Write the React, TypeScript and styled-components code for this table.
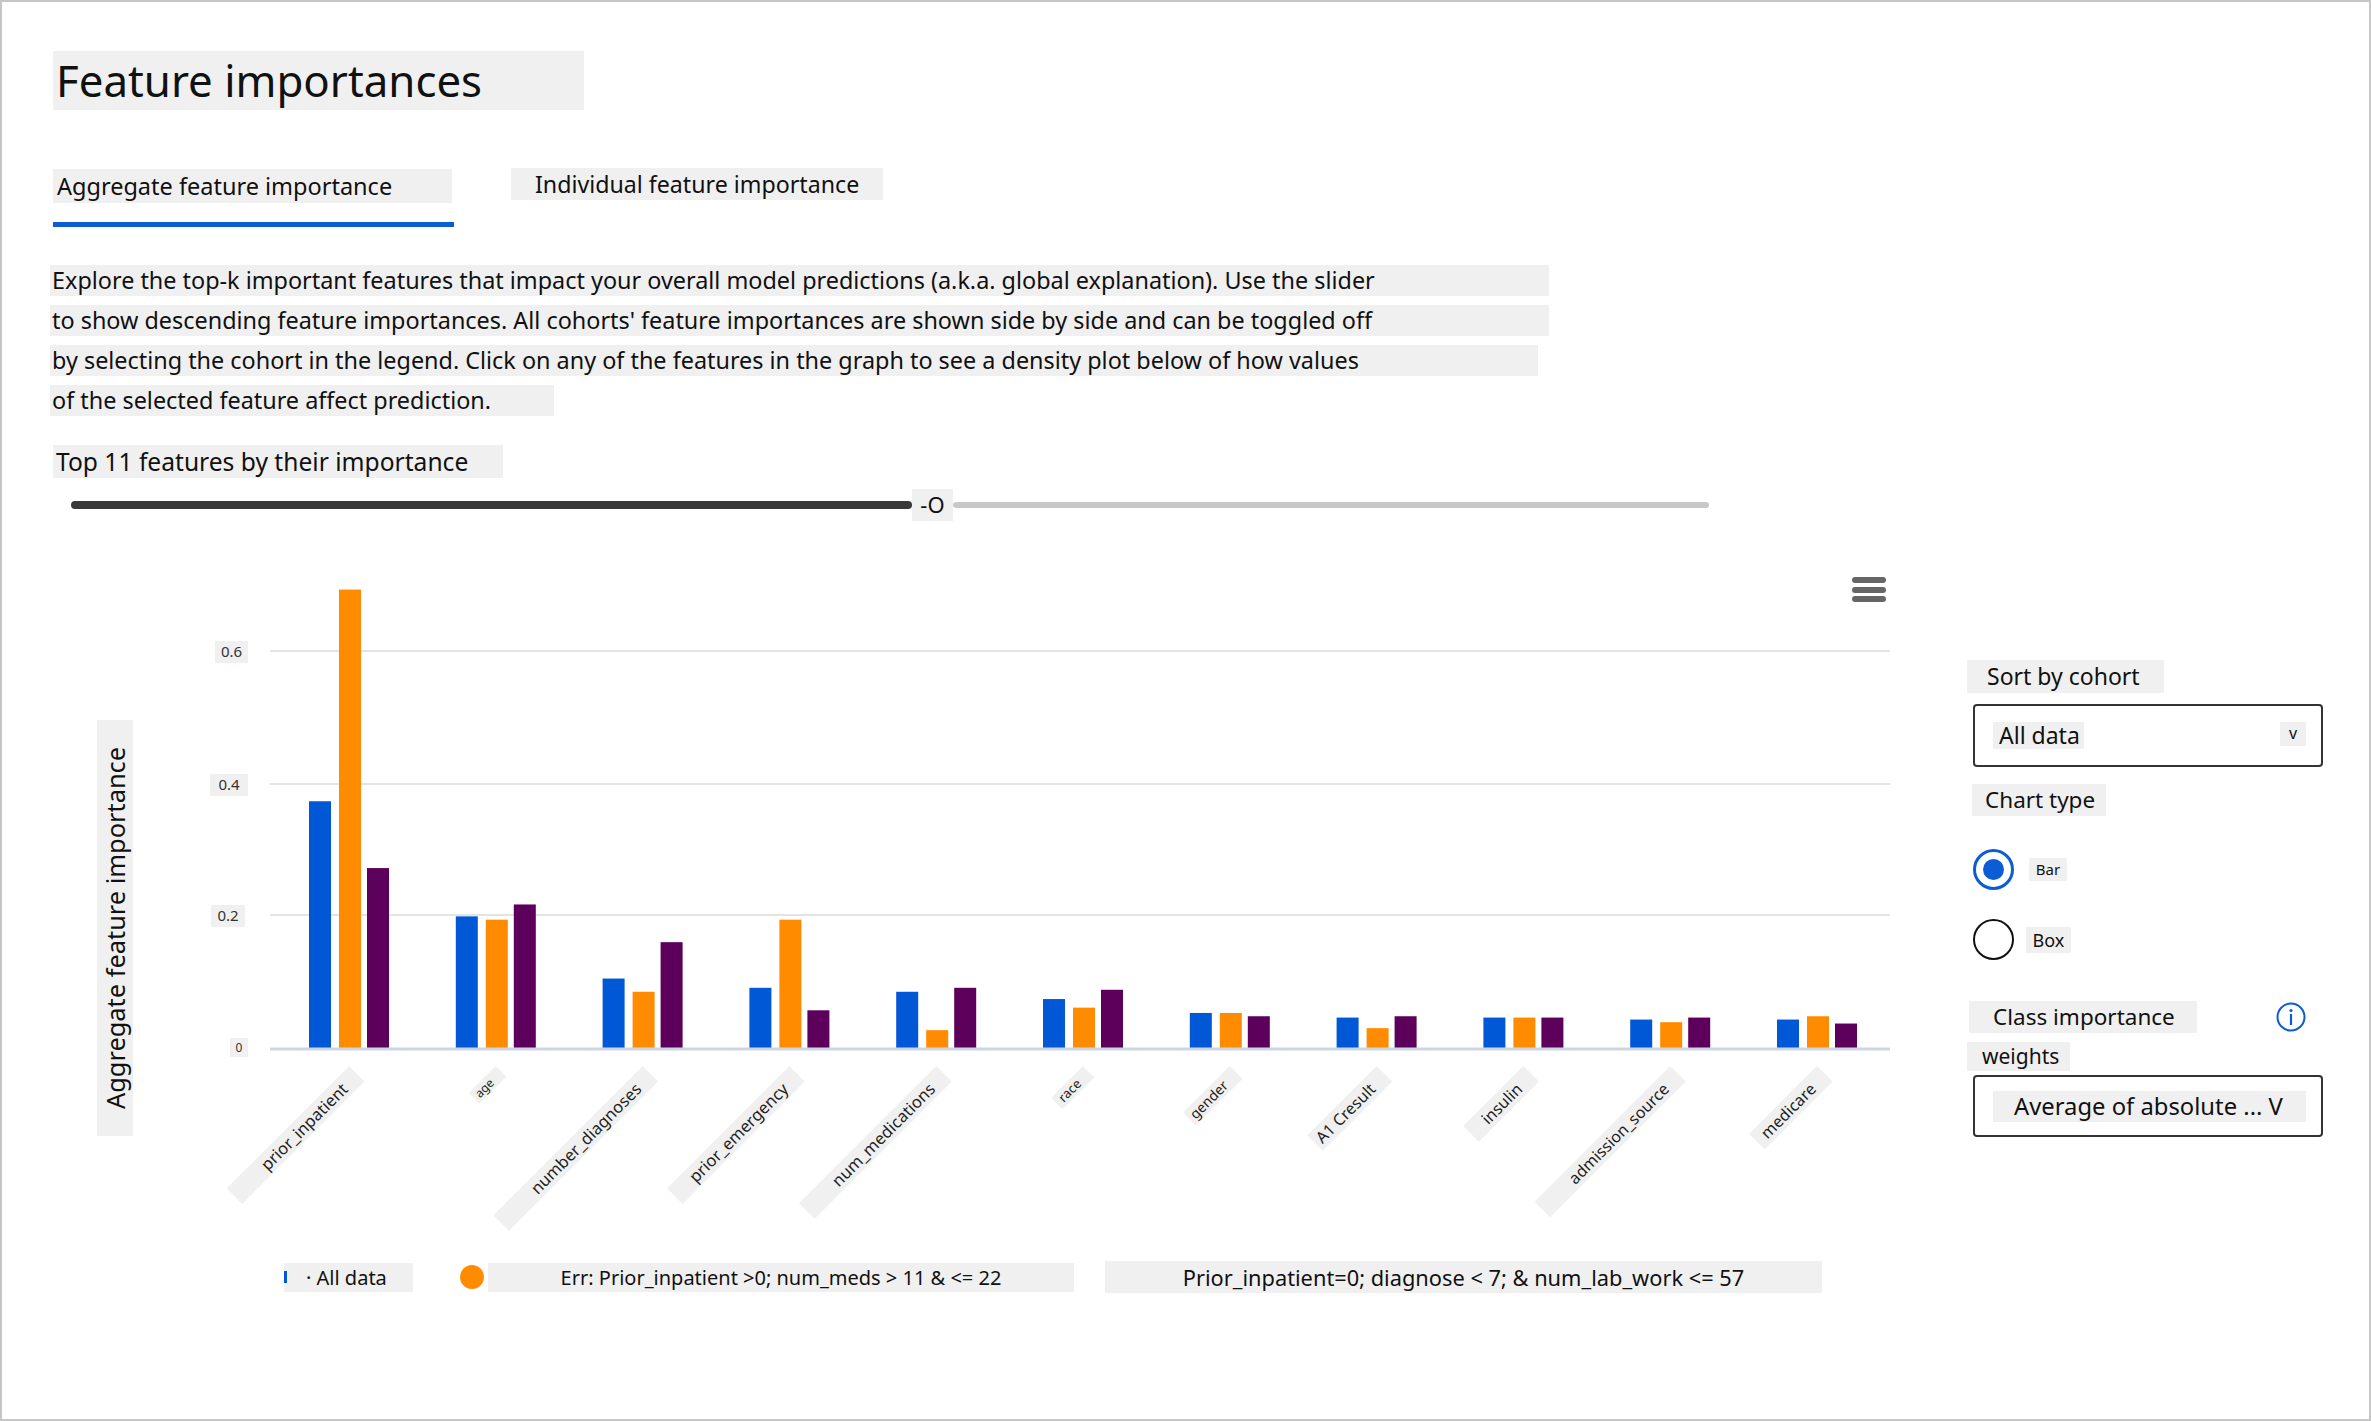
import React from "react";
import styled, { createGlobalStyle } from "styled-components";

const GlobalStyle = createGlobalStyle`
  html, body {
    margin: 0;
    padding: 0;
    background: #ffffff;
  }
  body {
    font-family: "Noto Sans", "Open Sans", sans-serif;
    color: #111111;
  }
`;

const BLUE = "#0058d6";
const ORANGE = "#ff8c00";
const PURPLE = "#5c005c";
const ACCENT = "#0b5cd5";
const CHIP = "#f0f0f0";

const Page = styled.div`
  box-sizing: border-box;
  width: 2371px;
  height: 1421px;
  border: 2px solid #c6c6c6;
  padding: 49px 0 0 51px;
  display: flex;
  flex-direction: column;
  align-items: flex-start;
  overflow: hidden;
`;

const Title = styled.h1`
  box-sizing: border-box;
  margin: 0;
  width: 531px;
  height: 59px;
  padding-left: 3px;
  background: ${CHIP};
  font-size: 43.8px;
  font-weight: 400;
  line-height: 59px;
  white-space: nowrap;
`;

const TabBar = styled.div`
  display: flex;
  align-items: flex-start;
  gap: 57px;
  margin-top: 58px;
`;

const Tab = styled.div`
  display: flex;
  flex-direction: column;
`;

const TabLabel = styled.span<{ $w: number; $h: number; $pad: number; $size: number; $top?: number }>`
  box-sizing: border-box;
  width: ${(p) => p.$w}px;
  height: ${(p) => p.$h}px;
  margin-top: ${(p) => p.$top ?? 0}px;
  padding-left: ${(p) => p.$pad}px;
  background: ${CHIP};
  font-size: ${(p) => p.$size}px;
  line-height: ${(p) => p.$h}px;
  white-space: nowrap;
`;

const TabUnderline = styled.div`
  margin-top: 19px;
  width: 401px;
  height: 5px;
  background: ${ACCENT};
`;

const Description = styled.div`
  display: flex;
  flex-direction: column;
  align-items: flex-start;
  gap: 9px;
  margin: 38px 0 0 -3px;
`;

const DescLine = styled.span<{ $w: number }>`
  box-sizing: border-box;
  width: ${(p) => p.$w}px;
  height: 31px;
  padding-left: 2px;
  background: ${CHIP};
  font-size: 23.4px;
  line-height: 31px;
  white-space: nowrap;
`;

const TopK = styled.span`
  box-sizing: border-box;
  width: 450px;
  height: 33px;
  margin-top: 29px;
  padding-left: 3px;
  background: ${CHIP};
  font-size: 24.6px;
  line-height: 33px;
  white-space: nowrap;
`;

const Slider = styled.div`
  display: flex;
  align-items: center;
  width: 1638px;
  height: 32px;
  margin: 11px 0 0 18px;
`;

const FilledTrack = styled.div`
  width: 841px;
  height: 8px;
  border-radius: 4px;
  background: #383838;
`;

const Thumb = styled.span`
  width: 41px;
  height: 32px;
  background: ${CHIP};
  font-size: 22px;
  line-height: 30px;
  text-align: center;
`;

const EmptyTrack = styled.div`
  flex: 1;
  height: 6px;
  border-radius: 3px;
  background: #c8c8c8;
`;

const MainRow = styled.div`
  display: flex;
  align-items: flex-start;
  margin-top: 38px;
`;

const ChartColumn = styled.div`
  display: flex;
  flex-direction: column;
`;

const ChartRow = styled.div`
  display: flex;
  align-items: flex-start;
`;

const AxisTitle = styled.div`
  width: 36px;
  height: 416px;
  margin: 161px 0 0 44px;
  background: ${CHIP};
  writing-mode: vertical-rl;
  transform: rotate(180deg);
  font-size: 25.4px;
  line-height: 36px;
  text-align: center;
  white-space: nowrap;
`;

const Plot = styled.svg`
  display: block;
  margin-left: 7px;
  font-family: "Noto Sans", "Open Sans", sans-serif;
`;

const Legend = styled.div`
  display: flex;
  align-items: center;
  margin: 22px 0 0 231px;
`;

const LegendChip = styled.span<{ $w: number; $h: number; $size: number; $gap: number }>`
  box-sizing: border-box;
  display: flex;
  align-items: center;
  justify-content: center;
  width: ${(p) => p.$w}px;
  height: ${(p) => p.$h}px;
  margin-left: ${(p) => p.$gap}px;
  background: ${CHIP};
  font-size: ${(p) => p.$size}px;
  white-space: nowrap;
`;

const AllDataChip = styled(LegendChip)`
  justify-content: flex-start;
  gap: 19px;
`;

const Sliver = styled.span`
  width: 3px;
  height: 12px;
  background: ${BLUE};
`;

const Dot = styled.span`
  width: 24px;
  height: 24px;
  margin-left: 47px;
  border-radius: 50%;
  background: ${ORANGE};
`;

const Side = styled.div`
  display: flex;
  flex-direction: column;
  align-items: flex-start;
  margin: 101px 0 0 67px;
`;

const SideLabel = styled.span<{ $w: number; $h: number; $pad: number; $top: number; $left?: number; $size?: number }>`
  box-sizing: border-box;
  width: ${(p) => p.$w}px;
  height: ${(p) => p.$h}px;
  margin: ${(p) => p.$top}px 0 0 ${(p) => p.$left ?? 0}px;
  padding-left: ${(p) => p.$pad}px;
  background: ${CHIP};
  font-size: ${(p) => p.$size ?? 23}px;
  line-height: ${(p) => p.$h}px;
  white-space: nowrap;
`;

const Dropdown = styled.div<{ $top: number; $h: number }>`
  box-sizing: border-box;
  display: flex;
  align-items: center;
  justify-content: space-between;
  width: 350px;
  height: ${(p) => p.$h}px;
  margin: ${(p) => p.$top}px 0 0 6px;
  padding: 0 15px 0 18px;
  border: 2px solid #333333;
  border-radius: 4px;
`;

const DropValue = styled.span<{ $w: number; $h: number; $pad: number; $size: number }>`
  box-sizing: border-box;
  width: ${(p) => p.$w}px;
  height: ${(p) => p.$h}px;
  padding-left: ${(p) => p.$pad}px;
  background: ${CHIP};
  font-size: ${(p) => p.$size}px;
  line-height: ${(p) => p.$h}px;
  white-space: nowrap;
`;

const Chevron = styled.span`
  width: 26px;
  height: 24px;
  margin-top: -4px;
  background: ${CHIP};
  font-size: 16px;
  line-height: 22px;
  text-align: center;
`;

const RadioRow = styled.div<{ $top: number; $gap: number }>`
  display: flex;
  align-items: center;
  gap: ${(p) => p.$gap}px;
  margin: ${(p) => p.$top}px 0 0 6px;
`;

const RadioCircle = styled.span<{ $checked?: boolean }>`
  box-sizing: border-box;
  display: flex;
  align-items: center;
  justify-content: center;
  width: 41px;
  height: 41px;
  border-radius: 50%;
  border: ${(p) => (p.$checked ? `3px solid ${ACCENT}` : "2px solid #111")};
  &::after {
    content: "";
    display: ${(p) => (p.$checked ? "block" : "none")};
    width: 21px;
    height: 21px;
    border-radius: 50%;
    background: ${ACCENT};
  }
`;

const RadioLabel = styled.span<{ $w: number; $h: number; $size: number }>`
  width: ${(p) => p.$w}px;
  height: ${(p) => p.$h}px;
  background: ${CHIP};
  font-size: ${(p) => p.$size}px;
  line-height: ${(p) => p.$h}px;
  text-align: center;
`;

const ClassRow = styled.div`
  display: flex;
  align-items: center;
  justify-content: space-between;
  width: 337px;
  margin: 41px 0 0 2px;
`;

type Feature = { name: string; v: [number, number, number]; len: number; size: number; thick: number };

const features: Feature[] = [
  { name: "prior_inpatient", v: [0.373, 0.693, 0.272], len: 173, size: 16.5, thick: 22 },
  { name: "age", v: [0.199, 0.194, 0.217], len: 38, size: 12, thick: 15 },
  { name: "number_diagnoses", v: [0.105, 0.085, 0.16], len: 211, size: 16.5, thick: 22 },
  { name: "prior_emergency", v: [0.091, 0.194, 0.057], len: 173, size: 16.5, thick: 22 },
  { name: "num_medications", v: [0.085, 0.027, 0.091], len: 194, size: 16.5, thick: 22 },
  { name: "race", v: [0.074, 0.061, 0.088], len: 45, size: 13, thick: 16 },
  { name: "gender", v: [0.053, 0.053, 0.048], len: 66, size: 14, thick: 18 },
  { name: "A1 Cresult", v: [0.046, 0.03, 0.048], len: 98, size: 16, thick: 22 },
  { name: "insulin", v: [0.046, 0.046, 0.046], len: 85, size: 16, thick: 22 },
  { name: "admission_source", v: [0.043, 0.039, 0.046], len: 192, size: 16, thick: 22 },
  { name: "medicare", v: [0.043, 0.048, 0.037], len: 96, size: 16, thick: 22 },
];

const PITCH = 146.8;
const X0 = 169;
const BASE = 489;
const UNIT = 661.5;
const BAR_OFFSETS = [0, 30, 58];
const BAR_COLORS = [BLUE, ORANGE, PURPLE];

const ticks = [
  { label: "0.6", y: 92, x: 75, w: 33, size: 15 },
  { label: "0.4", y: 225, x: 70, w: 38, size: 15 },
  { label: "0.2", y: 356, x: 71, w: 34, size: 15 },
  { label: "0", y: 489, x: 90, w: 18, size: 12 },
];

const BarChart = () => (
  <Plot width={1760} height={680} viewBox="0 0 1760 680">
    {ticks.slice(0, 3).map((t) => (
      <line key={t.label} x1={130} x2={1750} y1={t.y} y2={t.y} stroke="#e4e4e4" strokeWidth={2} />
    ))}
    {ticks.map((t) => (
      <g key={`t-${t.label}`}>
        <rect x={t.x} y={t.y - 10} width={t.w} height={t.size + 7} fill={CHIP} />
        <text x={t.x + t.w / 2} y={t.y + t.size / 2 - 2} fontSize={t.size} fill="#333" textAnchor="middle">
          {t.label}
        </text>
      </g>
    ))}
    {features.map((f, i) =>
      f.v.map((val, k) => {
        const h = val * UNIT;
        return (
          <rect
            key={`${f.name}-${k}`}
            x={X0 + i * PITCH + BAR_OFFSETS[k]}
            y={BASE - h}
            width={22}
            height={h}
            fill={BAR_COLORS[k]}
          />
        );
      })
    )}
    <line x1={130} x2={1750} y1={BASE + 1} y2={BASE + 1} stroke="#cdd5e3" strokeWidth={3} />
    {features.map((f, i) => {
      const ax = X0 + i * PITCH + 40;
      return (
        <g key={`l-${f.name}`} transform={`translate(${ax} 507) rotate(-45)`}>
          <rect x={-f.len} y={0} width={f.len} height={f.thick} fill={CHIP} />
          <text x={-f.thick * 0.55 - 5} y={f.thick * 0.78} fontSize={f.size} fill="#222" textAnchor="end">
            {f.name}
          </text>
        </g>
      );
    })}
    <g fill="#666">
      <rect x={1712} y={18} width={34} height={6} rx={3} />
      <rect x={1712} y={28} width={34} height={6} rx={3} />
      <rect x={1712} y={37} width={34} height={6} rx={3} />
    </g>
  </Plot>
);

const InfoIcon = () => (
  <svg width="30" height="30" viewBox="0 0 30 30">
    <circle cx="15" cy="15" r="13.5" fill="none" stroke={ACCENT} strokeWidth="2" />
    <circle cx="15" cy="8.5" r="1.6" fill={ACCENT} />
    <rect x="13.9" y="12" width="2.2" height="11" fill={ACCENT} />
  </svg>
);

export default function App() {
  return (
    <>
      <GlobalStyle />
      <Page>
        <Title>Feature importances</Title>
        <TabBar>
          <Tab>
            <TabLabel $w={399} $h={34} $pad={4} $top={1} $size={23.5}>
              Aggregate feature importance
            </TabLabel>
            <TabUnderline />
          </Tab>
          <TabLabel $w={372} $h={32} $pad={24} $size={23.2}>
            Individual feature importance
          </TabLabel>
        </TabBar>
        <Description>
          <DescLine $w={1499}>
            Explore the top-k important features that impact your overall model predictions (a.k.a. global explanation). Use the slider
          </DescLine>
          <DescLine $w={1499}>
            to show descending feature importances. All cohorts' feature importances are shown side by side and can be toggled off
          </DescLine>
          <DescLine $w={1488}>
            by selecting the cohort in the legend. Click on any of the features in the graph to see a density plot below of how values
          </DescLine>
          <DescLine $w={504}>of the selected feature affect prediction.</DescLine>
        </Description>
        <TopK>Top 11 features by their importance</TopK>
        <Slider>
          <FilledTrack />
          <Thumb>-O</Thumb>
          <EmptyTrack />
        </Slider>
        <MainRow>
          <ChartColumn>
            <ChartRow>
              <AxisTitle>Aggregate feature importance</AxisTitle>
              <BarChart />
            </ChartRow>
            <Legend>
              <AllDataChip $w={129} $h={29} $size={20} $gap={0}>
                <Sliver />
                <span>· All data</span>
              </AllDataChip>
              <Dot />
              <LegendChip $w={586} $h={29} $size={20} $gap={4}>
                Err: Prior_inpatient &gt;0; num_meds &gt; 11 &amp; &lt;= 22
              </LegendChip>
              <LegendChip $w={717} $h={32} $size={21.8} $gap={31}>
                Prior_inpatient=0; diagnose &lt; 7; &amp; num_lab_work &lt;= 57
              </LegendChip>
            </Legend>
          </ChartColumn>
          <Side>
            <SideLabel $w={197} $h={33} $pad={20} $top={0}>
              Sort by cohort
            </SideLabel>
            <Dropdown $top={11} $h={63}>
              <DropValue $w={91} $h={27} $pad={6} $size={23}>
                All data
              </DropValue>
              <Chevron>v</Chevron>
            </Dropdown>
            <SideLabel $w={134} $h={32} $pad={13} $top={17} $left={5} $size={22.5}>
              Chart type
            </SideLabel>
            <RadioRow $top={33} $gap={15}>
              <RadioCircle $checked />
              <RadioLabel $w={38} $h={23} $size={15}>
                Bar
              </RadioLabel>
            </RadioRow>
            <RadioRow $top={29} $gap={12}>
              <RadioCircle />
              <RadioLabel $w={45} $h={26} $size={18}>
                Box
              </RadioLabel>
            </RadioRow>
            <ClassRow>
              <SideLabel $w={228} $h={32} $pad={24} $top={0} $size={22.5}>
                Class importance
              </SideLabel>
              <InfoIcon />
            </ClassRow>
            <SideLabel $w={103} $h={29} $pad={15} $top={9} $size={21}>
              weights
            </SideLabel>
            <Dropdown $top={4} $h={62}>
              <DropValue $w={314} $h={31} $pad={21} $size={23.8}>
                Average of absolute ... V
              </DropValue>
            </Dropdown>
          </Side>
        </MainRow>
      </Page>
    </>
  );
}
